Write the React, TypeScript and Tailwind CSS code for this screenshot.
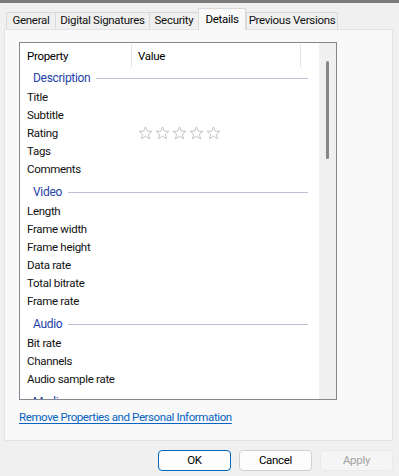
import React from "react";

const tabs = [
  { label: "General", w: "w-[49px]" },
  { label: "Digital Signatures", w: "w-[94px]" },
  { label: "Security", w: "w-[49px]" },
  { label: "Details", w: "w-[48px]" },
  { label: "Previous Versions", w: "w-[92px]" },
];

type Row = { group: string; items: string[] };

const rows: Row[] = [
  { group: "Description", items: ["Title", "Subtitle", "Rating", "Tags", "Comments"] },
  { group: "Video", items: ["Length", "Frame width", "Frame height", "Data rate", "Total bitrate", "Frame rate"] },
  { group: "Audio", items: ["Bit rate", "Channels", "Audio sample rate"] },
  { group: "Media", items: [] },
];

const Star = () => (
  <svg width="15" height="14" viewBox="0 0 15 14" className="shrink-0">
    <path
      d="M7.5 0.8 L9.3 5.1 L13.9 5.3 L10.4 8.2 L11.6 12.8 L7.5 10.3 L3.4 12.8 L4.6 8.2 L1.1 5.3 L5.7 5.1 Z"
      fill="none"
      stroke="#c4c4c4"
      strokeWidth="1"
      strokeLinejoin="round"
    />
  </svg>
);

const GroupHeader = ({ label, first }: { label: string; first?: boolean }) => (
  <div className={`flex items-center shrink-0 ${first ? "h-[21px] pt-[2px]" : "h-[24px] pt-[5px]"} pb-[1px] pl-[13px] pr-[11px]`}>
    <span className="text-[#2441a8] text-[12px] leading-none">{label}</span>
    <div className="flex-1 h-px bg-[#b8bfd6] ml-[6px]" />
  </div>
);

const ItemRow = ({ label }: { label: string }) => (
  <div className="flex items-center h-[18px] pt-[2px] shrink-0">
    <div className="w-[112px] pl-[7px] text-[#111] whitespace-nowrap">{label}</div>
    <div className="pl-[6px] flex gap-[2px] -mt-[2px]">
      {label === "Rating" && (
        <>
          <Star />
          <Star />
          <Star />
          <Star />
          <Star />
        </>
      )}
    </div>
  </div>
);

export default function App() {
  return (
    <div className="w-[399px] h-[476px] bg-[#f0f0f0] flex flex-col font-['Segoe_UI','Roboto',sans-serif] text-[11.5px] tracking-[-0.3px] text-black overflow-hidden">
      <div className="h-[3px] bg-[#7c7c7c] shrink-0" />

      {/* tabs */}
      <div className="h-[26px] flex items-end pl-[6px] shrink-0">
        {tabs.map((t) => {
          const active = t.label === "Details";
          return (
            <div
              key={t.label}
              className={
                active
                  ? `${t.w} relative z-10 -mb-px h-[22px] flex items-center justify-center bg-[#f9f9f9] border border-b-0 border-[#d9d9d9] text-black whitespace-nowrap`
                  : `${t.w} h-[17px] flex items-center justify-center bg-[#f0f0f0] border border-b-0 border-r-0 last:border-r border-[#d9d9d9] text-[#111] whitespace-nowrap`
              }
            >
              {t.label}
            </div>
          );
        })}
      </div>

      {/* panel */}
      <div className="ml-[4px] w-[389px] h-[412px] shrink-0 bg-[#f9f9f9] border border-[#e3e3e3] pl-[14px] pt-[12px] flex flex-col">
        <div className="w-[318px] h-[358px] shrink-0 border border-[#828790] bg-white flex overflow-hidden">
          <div className="flex-1 flex flex-col overflow-hidden pt-[1px]">
            <div className="h-[23px] flex shrink-0">
              <div className="w-[111px] pl-[7px] flex items-center pt-[2px]">Property</div>
              <div className="w-px bg-[#e5e5e5]" />
              <div className="w-[168px] pl-[6px] flex items-center pt-[2px]">Value</div>
              <div className="w-px bg-[#e5e5e5]" />
            </div>
            {rows.map((r, i) => (
              <React.Fragment key={r.group}>
                <GroupHeader label={r.group} first={i === 0} />
                {r.items.map((it) => (
                  <ItemRow key={it} label={it} />
                ))}
              </React.Fragment>
            ))}
          </div>
          <div className="w-[17px] bg-[#f0f0f0] flex justify-center pt-[18px] shrink-0">
            <div className="w-[3px] h-[98px] bg-[#868686] rounded-full" />
          </div>
        </div>
        <div className="mt-[9px] h-[16px] leading-[16px] whitespace-nowrap">
          <span className="text-[#0563c1] underline underline-offset-2 tracking-[-0.4px]">Remove Properties and Personal Information</span>
        </div>
      </div>

      {/* buttons */}
      <div className="flex justify-end gap-[8px] pr-[6px] mt-[9px] shrink-0">
        <button className="w-[73px] h-[21px] rounded-[4px] border border-[#0067c0] bg-[#fdfdfd] text-black leading-none">OK</button>
        <button className="w-[73px] h-[21px] rounded-[4px] border border-[#d0d0d0] bg-[#fdfdfd] text-black leading-none">Cancel</button>
        <button className="w-[73px] h-[21px] rounded-[4px] border border-[#e9e9e9] bg-[#f5f5f5] text-[#a3a3a3] leading-none">Apply</button>
      </div>
    </div>
  );
}
